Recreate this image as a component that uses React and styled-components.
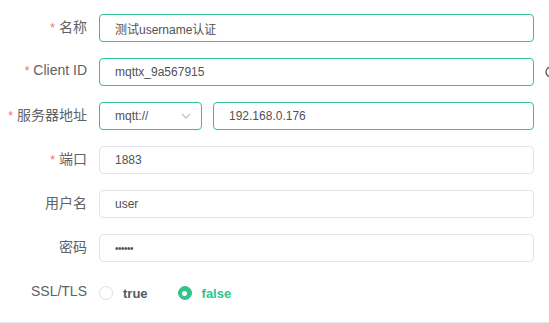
import React from "react";
import styled, { createGlobalStyle } from "styled-components";

const Global = createGlobalStyle`
  html, body { margin: 0; padding: 0; background: #fff; overflow: hidden; }
  body { font-family: "Liberation Sans", Arial, "Noto Sans CJK SC", sans-serif; }
`;

const Page = styled.div`
  width: 549px;
  height: 323px;
  box-sizing: border-box;
  padding-top: 14px;
  border-bottom: 1px solid #e4e4ec;
  overflow: hidden;
`;

const Form = styled.div`
  display: flex;
  flex-direction: column;
  gap: 16px;
`;

const Row = styled.div`
  display: flex;
  align-items: center;
  height: 28px;
  white-space: nowrap;
`;

const Label = styled.label`
  width: 87px;
  padding-right: 12px;
  flex: none;
  text-align: right;
  font-size: 14px;
  line-height: 20px;
  color: #606266;
  margin-top: ${(p) => p.$up || 0}px;
`;

const Star = styled.span`
  color: #f56c6c;
  margin-right: 4px;
  font-size: 12px;
`;

const Field = styled.div`
  display: flex;
  gap: 11px;
  width: 435px;
  flex: none;
`;

const Input = styled.div`
  box-sizing: border-box;
  height: 28px;
  flex: ${(p) => (p.$w ? "none" : "1")};
  width: ${(p) => (p.$w ? p.$w + "px" : "auto")};
  border: 1px solid ${(p) => (p.$focus ? "#34c388" : "#e3e3ee")};
  border-radius: 4px;
  padding: 0 ${(p) => (p.$w ? 10 : 15)}px 0 15px;
  display: flex;
  align-items: center;
  justify-content: space-between;
  font-size: 12px;
  color: #4f5258;
`;

const Dots = styled.span`
  font-size: 10px;
  letter-spacing: -0.5px;
  color: #4f5258;
`;

const Side = styled.span`
  margin-left: 10px;
  display: inline-flex;
  color: #606266;
`;

const Radios = styled.div`
  display: flex;
  align-items: center;
  gap: 30px;
  margin-top: 2px;
`;

const Radio = styled.span`
  display: inline-flex;
  align-items: center;
  gap: 10px;
  font-size: 13px;
  font-weight: bold;
  color: ${(p) => (p.$on ? "#34c388" : "#555960")};
`;

const Dot = styled.span`
  box-sizing: border-box;
  width: 14px;
  height: 14px;
  border-radius: 50%;
  border: 1px solid ${(p) => (p.$on ? "#34c388" : "#dcdfe6")};
  background: ${(p) => (p.$on ? "#34c388" : "#fff")};
  display: inline-flex;
  align-items: center;
  justify-content: center;
  &::after {
    content: "";
    width: 5px;
    height: 5px;
    border-radius: 50%;
    background: #fff;
    display: ${(p) => (p.$on ? "block" : "none")};
  }
`;

const Chevron = () => (
  <svg width="10" height="6" viewBox="0 0 10 6" fill="none">
    <path d="M1 1l4 4 4-4" stroke="#c0c4cc" strokeWidth="1.4" />
  </svg>
);

const Refresh = () => (
  <svg width="14" height="14" viewBox="0 0 14 14" fill="none">
    <path d="M12 7a5 5 0 1 1-1.5-3.6" stroke="#606266" strokeWidth="1.4" />
    <path d="M11 1v3h-3" stroke="#606266" strokeWidth="1.4" />
  </svg>
);

export default function App() {
  return (
    <>
      <Global />
      <Page>
        <Form>
          <Row>
            <Label $up={-2}><Star>*</Star>名称</Label>
            <Field><Input $focus>测试username认证</Input></Field>
          </Row>
          <Row>
            <Label $up={-4}><Star>*</Star>Client ID</Label>
            <Field><Input $focus>mqttx_9a567915</Input></Field>
            <Side><Refresh /></Side>
          </Row>
          <Row>
            <Label $up={-2}><Star>*</Star>服务器地址</Label>
            <Field>
              <Input $focus $w={103}>mqtt://<Chevron /></Input>
              <Input $focus>192.168.0.176</Input>
            </Field>
          </Row>
          <Row>
            <Label $up={-2}><Star>*</Star>端口</Label>
            <Field><Input>1883</Input></Field>
          </Row>
          <Row>
            <Label $up={-2}>用户名</Label>
            <Field><Input>user</Input></Field>
          </Row>
          <Row>
            <Label $up={-2}>密码</Label>
            <Field><Input><Dots>••••••</Dots></Input></Field>
          </Row>
          <Row>
            <Label $up={-2}>SSL/TLS</Label>
            <Radios>
              <Radio><Dot />true</Radio>
              <Radio $on><Dot $on />false</Radio>
            </Radios>
          </Row>
        </Form>
      </Page>
    </>
  );
}
